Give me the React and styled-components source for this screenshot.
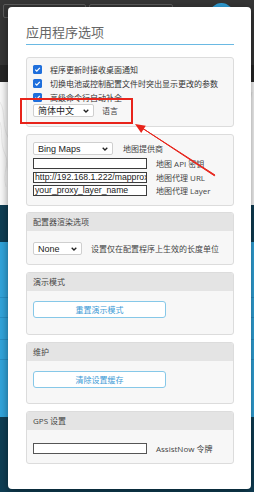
import React from "react";
import styled, { createGlobalStyle } from "styled-components";

const GlobalStyle = createGlobalStyle`
  html, body {
    margin: 0;
    padding: 0;
  }
  body {
    width: 254px;
    height: 492px;
    overflow: hidden;
    font-family: "Open Sans", "Noto Sans CJK SC", sans-serif;
  }
`;

const Stage = styled.div`
  position: relative;
  width: 254px;
  height: 492px;
  overflow: hidden;
  display: flex;
  flex-direction: column;
`;

const Band = styled.div`
  flex-shrink: 0;
  height: ${(p) => p.h}px;
  background: ${(p) => p.bg};
  border-bottom: ${(p) => (p.line ? "1px solid #2790c6" : "none")};
  box-sizing: border-box;
`;

const TopBar = styled.div`
  height: 65px;
  background: #353535;
  display: flex;
  align-items: flex-start;
  gap: 3px;
  padding: 4px 3px 0;
  box-sizing: border-box;
`;

const TopButton = styled.div`
  width: ${(p) => p.w}px;
  height: 14px;
  border: 1px solid #5c5c5c;
  border-radius: 2px;
  box-sizing: border-box;
`;

const Avatar = styled.div`
  width: 23px;
  height: 23px;
  margin-top: -1px;
  margin-left: 34px;
  border-radius: 50%;
  background: #2f9fd8;
`;

const MapArea = styled.div`
  height: 123px;
  background: #f9f9f9;
  flex-shrink: 0;
  overflow: hidden;
`;

const Modal = styled.div`
  position: absolute;
  left: 8px;
  top: 7px;
  width: 243px;
  height: 482px;
  background: #fff;
  border-radius: 4px;
  box-shadow: 0 2px 8px rgba(0, 0, 0, 0.45);
  box-sizing: border-box;
  padding: 17px 17px 0 18px;
`;

const Title = styled.div`
  font-family: "Liberation Serif", "Noto Sans CJK SC", serif;
  font-size: 13px;
  line-height: 17px;
  color: #666;
  padding-bottom: 3px;
  border-bottom: 1px solid #6ab9e3;
  margin-bottom: 12px;
`;

const Panel = styled.div`
  border: 1px solid #dcdcdc;
  border-radius: 3px;
  background: #f7f7f7;
  margin-bottom: ${(p) => p.mb ?? 7}px;
  overflow: hidden;
`;

const PanelHead = styled.div`
  height: 18px;
  line-height: 18px;
  background: #e4e4e4;
  padding-left: 6px;
  font-size: 8px;
  color: #444;
`;

const PanelBody = styled.div`
  padding: ${(p) => p.pad};
  display: flex;
  flex-direction: column;
  gap: ${(p) => p.gap ?? 0}px;
`;

const CheckRow = styled.div`
  display: flex;
  align-items: center;
  height: 14px;
  gap: 8px;
  font-size: 8px;
  color: #333;
  white-space: nowrap;
`;

const CheckBox = styled.span`
  width: 9px;
  height: 9px;
  border-radius: 1.5px;
  background: #1f6fdc;
  display: flex;
  align-items: center;
  justify-content: center;
  flex-shrink: 0;
`;

const FieldRow = styled.div`
  display: flex;
  align-items: center;
  gap: ${(p) => p.gap ?? 9}px;
  font-size: 8px;
  color: #444;
  white-space: nowrap;
`;

const SelectBox = styled.div`
  width: ${(p) => p.w}px;
  height: 13px;
  box-sizing: border-box;
  border: 1px solid #cfcfcf;
  border-radius: 2px;
  background: #fff;
  display: flex;
  align-items: center;
  justify-content: space-between;
  padding: 0 4px 0 4px;
  font-family: "Liberation Sans", "Noto Sans CJK SC", sans-serif;
  font-size: 9px;
  color: #222;
`;

const TextInput = styled.div`
  width: 114px;
  height: 11px;
  box-sizing: border-box;
  border: 1px solid #3c3c3c;
  background: #fff;
  padding-left: 1px;
  font-family: "Liberation Sans", sans-serif;
  font-size: 8.7px;
  line-height: 9px;
  color: #222;
  overflow: hidden;
  white-space: nowrap;
`;

const OutlineButton = styled.div`
  width: 133px;
  height: 17px;
  box-sizing: border-box;
  border: 1px solid #86c8e8;
  border-radius: 3px;
  background: #fff;
  color: #3d9bd6;
  font-size: 8px;
  display: flex;
  align-items: center;
  justify-content: center;
`;

const Highlight = styled.div`
  position: absolute;
  left: 20px;
  top: 98px;
  width: 113px;
  height: 26px;
  border: 2px solid #e8241b;
  box-sizing: border-box;
`;

const Overlay = styled.svg`
  position: absolute;
  left: 0;
  top: 0;
  pointer-events: none;
`;

const Check = () => (
  <CheckBox>
    <svg width="7" height="7" viewBox="0 0 10 10">
      <path d="M1.8 5.2 L4 7.4 L8.3 2.6" fill="none" stroke="#fff" strokeWidth="1.8" />
    </svg>
  </CheckBox>
);

const Chevron = () => (
  <svg width="6" height="4" viewBox="0 0 6 4">
    <path d="M0.7 0.7 L3 3 L5.3 0.7" fill="none" stroke="#222" strokeWidth="1.3" />
  </svg>
);

const Select = ({ w, children }) => (
  <SelectBox w={w}>
    <span>{children}</span>
    <Chevron />
  </SelectBox>
);

const App = () => {
  return (
    <>
      <GlobalStyle />
      <Stage>
        <TopBar>
          <TopButton w={83} />
          <TopButton w={84} />
          <Avatar />
        </TopBar>
        <Band h={17} bg="#262626" />
        <MapArea>
          <svg width="254" height="123" viewBox="0 0 254 123">
            <g fill="none" stroke="#e6e6e6" strokeWidth="0.8">
              <path d="M0 20 C6 30 2 45 8 55 S4 80 10 95 S6 110 12 123" />
              <path d="M0 40 C3 50 0 62 5 72 S2 90 6 105" />
              <path d="M252 10 C246 30 250 50 246 70 S250 100 247 123" />
            </g>
          </svg>
        </MapArea>
        <Band h={37} bg="#0f3e54" />
        <Band h={56} bg="#31a4db" line />
        <Band h={20} bg="#31a4db" line />
        <Band h={22} bg="#31a4db" line />
        <Band h={20} bg="#31a4db" line />
        <Band h={57} bg="#31a4db" />
        <Band h={75} bg="#0f3e54" />

        <Modal>
          <Title>应用程序选项</Title>

          <Panel>
            <PanelBody pad="4px 6px 9px">
              <CheckRow>
                <Check />
                程序更新时接收桌面通知
              </CheckRow>
              <CheckRow>
                <Check />
                切换电池或控制配置文件时突出显示更改的参数
              </CheckRow>
              <CheckRow>
                <Check />
                高级命令行自动补全
              </CheckRow>
              <FieldRow gap={8}>
                <Select w={61}>简体中文</Select>
                语言
              </FieldRow>
            </PanelBody>
          </Panel>

          <Panel mb={6}>
            <PanelBody pad="7px 6px 9px" gap={2.5}>
              <FieldRow gap={10} style={{ marginBottom: 0.5 }}>
                <Select w={80}>Bing Maps</Select>
                地图提供商
              </FieldRow>
              <FieldRow>
                <TextInput />
                地图 API 密钥
              </FieldRow>
              <FieldRow>
                <TextInput>http://192.168.1.222/mapproxy</TextInput>
                地图代理 URL
              </FieldRow>
              <FieldRow>
                <TextInput>your_proxy_layer_name</TextInput>
                地图代理 Layer
              </FieldRow>
            </PanelBody>
          </Panel>

          <Panel>
            <PanelHead>配置器渲染选项</PanelHead>
            <PanelBody pad="11px 6px 9px">
              <FieldRow>
                <Select w={49}>None</Select>
                设置仅在配置程序上生效的长度单位
              </FieldRow>
            </PanelBody>
          </Panel>

          <Panel>
            <PanelHead>演示模式</PanelHead>
            <PanelBody pad="10px 6px 16px">
              <OutlineButton>重置演示模式</OutlineButton>
            </PanelBody>
          </Panel>

          <Panel>
            <PanelHead>维护</PanelHead>
            <PanelBody pad="10px 6px 15px">
              <OutlineButton>清除设置缓存</OutlineButton>
            </PanelBody>
          </Panel>

          <Panel>
            <PanelHead>GPS 设置</PanelHead>
            <PanelBody pad="13px 6px 9px">
              <FieldRow>
                <TextInput style={{ borderColor: "#555" }} />
                AssistNow 令牌
              </FieldRow>
            </PanelBody>
          </Panel>
        </Modal>

        <Highlight />
        <Overlay width="254" height="492" viewBox="0 0 254 492">
          <path d="M143 128.6 L215 175 L214.4 175.8 Z" fill="#e8241b" stroke="#e8241b" strokeWidth="1" strokeLinejoin="round" />
          <polygon points="135,124 145.8,125.8 141.2,133" fill="#e8241b" />
        </Overlay>
      </Stage>
    </>
  );
};

export default App;
